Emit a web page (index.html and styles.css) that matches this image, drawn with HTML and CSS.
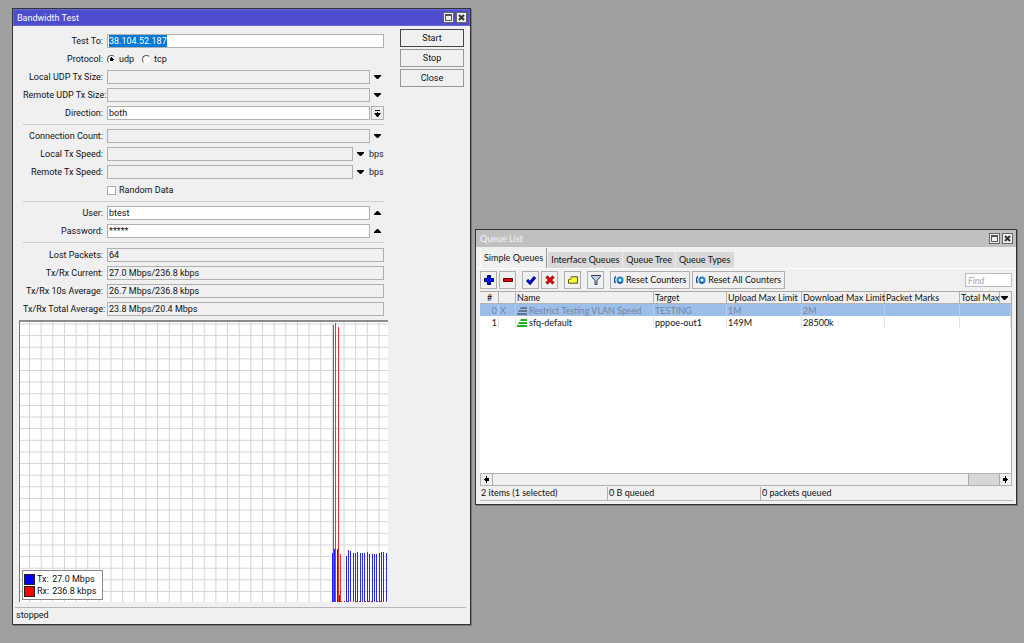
FILE: index.html
```html
<!DOCTYPE html>
<html lang="en">
<head>
<meta charset="utf-8">
<title>Bandwidth Test</title>
<link rel="stylesheet" href="styles.css">
</head>
<body>
<svg class="defs" aria-hidden="true">
  <symbol id="down" viewBox="0 0 7 4"><path d="M0 0h7v1L4 4H3L0 1z"/></symbol>
  <symbol id="up" viewBox="0 0 7 4"><path d="M0 4h7V3L4 0H3L0 3z"/></symbol>
  <symbol id="max" viewBox="0 0 9 9"><path d="M1.500 1.500h6v6h-6z" fill="#eee" stroke="#555"/><path d="M1 1h7v2H1z" fill="#555"/></symbol>
  <symbol id="close" viewBox="0 0 9 9"><path d="M2 2l5 5M7 2l-5 5" stroke="#333" stroke-width="2"/></symbol>
  <symbol id="reset" viewBox="0 0 10 10"><path d="M2 1.500C0 3 0 6 1.500 8" fill="none" stroke="#0b4f9c" stroke-width="1.500"/><circle cx="6" cy="5" r="2.500" fill="#fff" stroke="#1687d2" stroke-width="2"/><path d="M3.500 7.500A3.500 3.500 0 0 0 8.500 7" fill="none" stroke="#0b3f8c"/></symbol>
  <symbol id="queue" viewBox="0 0 10 8"><path d="M4 0h6v2H3zM2 3h8v2H1zM0 6h10v2H0z"/></symbol>
</svg>

<main class="desktop">
<section class="window bandwidth">
  <header class="titlebar active">
    <h1>Bandwidth Test</h1>
    <button class="winbtn" aria-label="Maximize"><svg><use href="#max"/></svg></button>
    <button class="winbtn" aria-label="Close window"><svg><use href="#close"/></svg></button>
  </header>
  <div class="content">
    <form class="form">
      <div class="row"><label for="to">Test To:</label><div class="field"><span class="box"><input class="bare" id="to" value="38.104.52.187"></span></div></div>
      <div class="row"><span class="label">Protocol:</span><div class="field radios"><label><input type="radio" name="p" checked>udp</label><label><input type="radio" name="p">tcp</label></div></div>
      <div class="row"><label for="lsize">Local UDP Tx Size:</label><div class="field"><input class="input off" id="lsize"><button type="button" class="arrow" aria-label="Set local size"><svg><use href="#down"/></svg></button></div></div>
      <div class="row"><label for="rsize">Remote UDP Tx Size:</label><div class="field"><input class="input off" id="rsize"><button type="button" class="arrow" aria-label="Set remote size"><svg><use href="#down"/></svg></button></div></div>
      <div class="row"><label for="dir">Direction:</label><div class="field"><select class="input" id="dir"><option>both</option></select><button type="button" class="arrow drop" aria-label="Choose direction"><svg viewBox="0 0 7 7"><path d="M1 0h5v1H1zM3 2h1v1h3L4 7H3L0 3h3z"/></svg></button></div></div>
      <hr>
      <div class="row"><label for="cc">Connection Count:</label><div class="field"><input class="input off" id="cc"><button type="button" class="arrow" aria-label="Set count"><svg><use href="#down"/></svg></button></div></div>
      <div class="row"><label for="ls">Local Tx Speed:</label><div class="field"><input class="input off" id="ls"><button type="button" class="arrow" aria-label="Set local speed"><svg><use href="#down"/></svg></button><span class="unit">bps</span></div></div>
      <div class="row"><label for="rs">Remote Tx Speed:</label><div class="field"><input class="input off" id="rs"><button type="button" class="arrow" aria-label="Set remote speed"><svg><use href="#down"/></svg></button><span class="unit">bps</span></div></div>
      <div class="row"><span class="label"></span><div class="field"><label class="check"><input type="checkbox">Random Data</label></div></div>
      <hr>
      <div class="row"><label for="user">User:</label><div class="field"><input class="input" id="user" value="btest"><button type="button" class="arrow" aria-label="Clear user"><svg><use href="#up"/></svg></button></div></div>
      <div class="row"><label for="pw">Password:</label><div class="field"><input class="input" id="pw" value="*****"><button type="button" class="arrow" aria-label="Clear password"><svg><use href="#up"/></svg></button></div></div>
      <hr class="wide">
      <div class="row"><label for="lost">Lost Packets:</label><div class="field"><input class="input off" id="lost" readonly value="64"></div></div>
      <div class="row"><label for="cur">Tx/Rx Current:</label><div class="field"><input class="input off" id="cur" readonly value="27.0 Mbps/236.8 kbps"></div></div>
      <div class="row"><label for="avg">Tx/Rx 10s Average:</label><div class="field"><input class="input off" id="avg" readonly value="26.7 Mbps/236.8 kbps"></div></div>
      <div class="row"><label for="tot">Tx/Rx Total Average:</label><div class="field"><input class="input off" id="tot" readonly value="23.8 Mbps/20.4 Mbps"></div></div>
    </form>
    <div class="actions">
      <button class="btn default">Start</button>
      <button class="btn">Stop</button>
      <button class="btn">Close</button>
    </div>
  </div>
  <div class="chart">
    <svg class="plot" viewBox="0 0 368 280" preserveAspectRatio="none" aria-label="Throughput graph">
      <defs><pattern id="grid" x="9" y="1.500" width="11.650" height="11.630" patternUnits="userSpaceOnUse"><path d="M.5 0v12M0 .5h12" stroke="#d4d4d4" fill="none"/></pattern></defs>
      <rect width="368" height="280" fill="url(#grid)"/>
      <g id="bars"></g>
    </svg>
    <div class="legend">
      <span class="swatch tx"></span><span>Tx:</span><span>27.0 Mbps</span>
      <span class="swatch rx"></span><span>Rx:</span><span>236.8 kbps</span>
    </div>
  </div>
  <footer class="status single">stopped</footer>
</section>

<section class="window queues">
  <header class="titlebar">
    <h1>Queue List</h1>
    <button class="winbtn" aria-label="Maximize"><svg><use href="#max"/></svg></button>
    <button class="winbtn" aria-label="Close window"><svg><use href="#close"/></svg></button>
  </header>
  <nav class="tabs">
    <button class="tab on">Simple Queues</button><button class="tab">Interface Queues</button><button class="tab">Queue Tree</button><button class="tab">Queue Types</button>
  </nav>
  <div class="toolbar">
    <button class="tool" aria-label="Add"><svg viewBox="0 0 10 10"><path d="M3.500.5h3v3h3v3h-3v3h-3v-3h-3v-3h3z" fill="#0010f0" stroke="#000050"/></svg></button>
    <button class="tool" aria-label="Remove"><svg viewBox="0 0 10 10"><path d="M.5 3.500h9v3h-9z" fill="#f00000" stroke="#500000"/></svg></button>
    <button class="tool split" aria-label="Enable"><svg viewBox="0 0 10 10"><path d="M1 5l3 3 5-6" fill="none" stroke="#000060" stroke-width="3"/><path d="M1.500 5l2.500 2.500 4.500-5.500" fill="none" stroke="#0018ff" stroke-width="1.500"/></svg></button>
    <button class="tool" aria-label="Disable"><svg viewBox="0 0 10 10"><path d="M1.500 1.500l7 7M8.500 1.500l-7 7" stroke="#700000" stroke-width="3"/><path d="M2 2l6 6M8 2l-6 6" stroke="#f00000" stroke-width="2"/></svg></button>
    <button class="tool split" aria-label="Comment"><svg viewBox="0 0 11 10"><path d="M3.500 1.500h7v7H.5v-4z" fill="#ff3" stroke="#443c00"/><path d="M.5 4.500h3v-3" fill="#fff" stroke="#998c00"/></svg></button>
    <button class="tool split" aria-label="Filter"><svg viewBox="0 0 10 10"><path d="M.5.500h9v1L6 5.500v4H4v-4L.5 1.500z" fill="#bcd0ea" stroke="#333f52"/></svg></button>
    <button class="tool text split"><svg><use href="#reset"/></svg>Reset Counters</button>
    <button class="tool text"><svg><use href="#reset"/></svg>Reset All Counters</button>
    <input class="find" placeholder="Find" aria-label="Find">
  </div>
  <div class="list">
    <table>
      <colgroup><col class="c1"><col class="c2"><col class="c3"><col class="c4"><col class="c5"><col class="c6"><col class="c5"><col class="c7"><col class="c8"></colgroup>
      <thead><tr><th class="center">#</th><th></th><th>Name</th><th>Target</th><th>Upload Max Limit</th><th>Download Max Limit</th><th>Packet Marks</th><th>Total Max</th><th class="pick"><button aria-label="Columns"><svg><use href="#down"/></svg></button></th></tr></thead>
      <tbody>
        <tr class="sel"><td class="num">0</td><td>X</td><td><svg class="q"><use href="#queue"/></svg>Restrict Testing VLAN Speed</td><td>TESTING</td><td>1M</td><td>2M</td><td></td><td colspan="2"></td></tr>
        <tr><td class="num">1</td><td></td><td><svg class="q green"><use href="#queue"/></svg>sfq-default</td><td>pppoe-out1</td><td>149M</td><td>28500k</td><td></td><td colspan="2"></td></tr>
      </tbody>
    </table>
  </div>
  <div class="scroll">
    <button aria-label="Scroll left"><svg viewBox="0 0 5 7"><path d="M0 3h1V2h1V0h1v2h2v3H3v2H2V5H1V4H0z"/></svg></button>
    <div class="track"><div class="thumb"></div></div>
    <button aria-label="Scroll right"><svg viewBox="0 0 5 7"><path d="M5 3H4V2H3V0H2v2H0v3h2v2h1V5h1V4h1z"/></svg></button>
  </div>
  <footer class="status"><span class="s1">2 items (1 selected)</span><span class="s2">0 B queued</span><span class="s3">0 packets queued</span></footer>
</section>
</main>
<script src="chart.js"></script>
</body>
</html>
```
FILE: styles.css
```css
* { box-sizing: border-box; }
body { margin: 0; background: #a0a0a0; font: 9px/12px Roboto, "Liberation Sans", sans-serif; color: #111; }
button, input, select { font: inherit; color: inherit; margin: 0; padding: 0; border-radius: 0; }
button { background: none; border: 0; }
svg { display: block; flex: none; }
.defs { position: absolute; width: 0; height: 0; }
.desktop { position: relative; min-height: 100vh; overflow: hidden; }
.window { position: absolute; display: flex; flex-direction: column; background: #f0f0f0; border: 1px solid #333; box-shadow: 1px 1px 0 #777; }
.bandwidth { left: 12px; top: 8px; width: 459px; }
.queues { left: 475px; top: 229px; width: 542px; font-family: Lato, Roboto, sans-serif; }
.titlebar { display: flex; align-items: center; gap: 2px; height: 17px; padding: 0 3px 0 4px; background: #c0c0c0; color: #f4f4f4; }
.titlebar.active { background: #4c4ccc; border: 1px solid #6666dc; padding: 0 2px 0 3px; color: #fff; }
.titlebar h1 { flex: 1; margin: 0; font-size: 9px; font-weight: normal; }
.winbtn { width: 11px; height: 11px; background: #eee; border: 1px solid #666; }
.winbtn svg { width: 9px; height: 9px; }

.content { display: flex; justify-content: space-between; padding: 6px 6px 0 10px; }
.form { width: 361px; }
.row { display: flex; align-items: center; height: 18px; }
.row > label, .label { width: 80px; text-align: right; white-space: nowrap; }
.field { flex: 1; display: flex; align-items: center; margin-left: 4px; min-width: 0; }
.input, .box { flex: 1; min-width: 0; height: 14px; padding: 0 1px; background: #fff; border: 1px solid #b0b0b0; outline: 0; }
.box { display: flex; }
.bare { width: 58px; height: 12px; padding: 0; border: 0; outline: 0; background: #0078d7; color: #fff; }
.input.off { background: #f0f0f0; }
select.input { appearance: none; }
.arrow { display: flex; align-items: center; justify-content: center; width: 13px; height: 14px; margin-left: 1px; }
.arrow svg { width: 7px; height: 4px; }
.drop { border: 1px solid #b0b0b0; }
.drop svg { width: 7px; height: 7px; }
.unit { width: 15px; margin-left: 2px; color: #223; }
.radios { gap: 8px; }
.radios label, .check { display: flex; align-items: center; gap: 3px; }
.radios input { appearance: none; width: 9px; height: 9px; border: 1px solid #eee; border-top-color: #555; border-left-color: #555; border-radius: 50%; background: #fff; }
.radios input:checked { background: radial-gradient(circle, #000 2px, #fff 2px); }
.check input { appearance: none; width: 9px; height: 9px; border: 1px solid #aaa; background: #fff; }
hr { width: 100%; margin: 2px 0; border: 0; border-top: 1px solid #ccc; }
hr.wide { margin-bottom: 3px; }
.actions { display: flex; flex-direction: column; gap: 2px; width: 64px; margin-top: -3px; }
.btn { height: 18px; border: 1px solid #999; background: #f0f0f0; }
.btn.default { border-color: #444; }

.chart { position: relative; width: 369px; margin: 2px 0 0 6px; background: #fff; border-top: 2px solid #8c8c8c; border-left: 1px solid #777; }
.plot { width: 100%; height: 280px; }
.legend { position: absolute; left: 2px; bottom: 2px; display: grid; grid-template-columns: 11px auto auto; column-gap: 2px; align-items: center; width: 81px; padding: 2px 1px; background: #fff; border: 1px solid #888; white-space: nowrap; justify-content: start; }
.legend span:nth-child(3n) { margin-left: 1px; }
.swatch { width: 11px; height: 11px; border: 1px solid #222; }
.tx { background: #00f; }
.rx { background: #f00; }
.status { display: flex; height: 15px; margin: 0 3px 3px 4px; padding-top: 1px; border-bottom: 1px solid #bbb; }
.status.single { height: 15px; margin: 5px 4px 2px 2px; padding: 1px 0 0 1px; border: 0; border-top: 1px solid #b8b8b8; }
.status span { padding-left: 1px; }
.status .s2, .status .s3 { border-left: 1px solid #b0b0b0; }
.s1 { width: 127px; }
.s2 { width: 153px; }

.tabs { display: flex; align-items: flex-end; padding: 1px 4px 0; }
.tab { height: 16px; padding: 0 3px; background: #d9d9d9; border-left: 1px solid #eee; }
.tab.on { height: 20px; background: #f0f0f0; border-left: 1px solid #fff; border-right: 1px solid #999; }
.toolbar { display: flex; align-items: center; gap: 2px; height: 23px; padding: 0 4px; border-top: 1px solid #fff; }
.tool { display: flex; align-items: center; justify-content: center; gap: 2px; width: 17px; height: 18px; border: 1px solid #b0b0b0; white-space: nowrap; }
.tool svg { width: 10px; height: 10px; }
.tool.text { width: auto; padding: 0 3px; }
.split { margin-left: 4px; }
.find { width: 47px; height: 14px; margin-left: auto; padding: 0 2px; border: 1px solid #bbb; font-style: italic; }
.find::placeholder { color: #aaa; }
.list { min-height: 182px; margin: 0 4px; background: #fff; border: 1px solid #aaa; border-width: 1px 1px 0 0; }
table { width: 100%; table-layout: fixed; border-collapse: separate; border-spacing: 0; }
th, td { height: 12px; padding: 0 0 0 1px; line-height: 11px; text-align: left; font-weight: normal; white-space: nowrap; border-right: 1px solid #e4e4e4; }
th { background: #f0f0f0; border-right-color: #b4b4b4; border-bottom: 1px solid #b4b4b4; }
.center { text-align: center; }
.num { padding-right: 1px; text-align: right; }
.sel td { background: #9cbfea; border-color: #b4cdef; color: #75849b; }
.c1 { width: 19px; }
.c2 { width: 17px; }
.c3 { width: 138px; }
.c4 { width: 73px; }
.c5 { width: 75px; }
.c6 { width: 83px; }
.c7 { width: auto; }
.c8 { width: 11px; }
th.pick { border-right: 0; }
.pick button { display: block; }
.pick svg { width: 7px; height: 4px; }
.q { display: inline-block; width: 10px; height: 8px; margin-right: 2px; vertical-align: -1px; fill: #66788f; }
.q.green { fill: #1fb01f; }
.scroll { display: flex; height: 13px; margin: 0 4px; border: 1px solid #b0b0b0; }
.scroll button { display: flex; align-items: center; justify-content: center; width: 11px; }
.scroll svg { width: 5px; height: 7px; }
.track { flex: 1; background: #d6d6d6; border: solid #aaa; border-width: 0 1px; }
.thumb { width: 94%; height: 100%; background: #f0f0f0; border-right: 1px solid #aaa; }
```
FILE: chart.js
```js
const bars = document.getElementById('bars');
function bar(x, top, color) {
  const r = document.createElementNS('http://www.w3.org/2000/svg', 'rect');
  r.setAttribute('x', x);
  r.setAttribute('y', top);
  r.setAttribute('width', 1);
  r.setAttribute('height', 280 - top);
  r.setAttribute('fill', color);
  bars.appendChild(r);
}
[[312, 231], [314, 227], [317, 227], [319, 273], [326, 234]].forEach(([x, y]) => bar(x, y, '#2020f0'));
const tops = [228, 229, 231, 231, 230, 231, 231, 231, 230, 232, 232, 232, 232, 231, 230, 230, 231];
tops.forEach((y, i) => bar(328 + Math.round(i * 2.35), y, '#2828f0'));
[[313, 3], [315, 1], [318, 5], [320, 232]].forEach(([x, y]) => bar(x, y, '#f03030'));
for (let x = 321; x < 368; x += 3) bar(x, 279, '#c02060');
```
